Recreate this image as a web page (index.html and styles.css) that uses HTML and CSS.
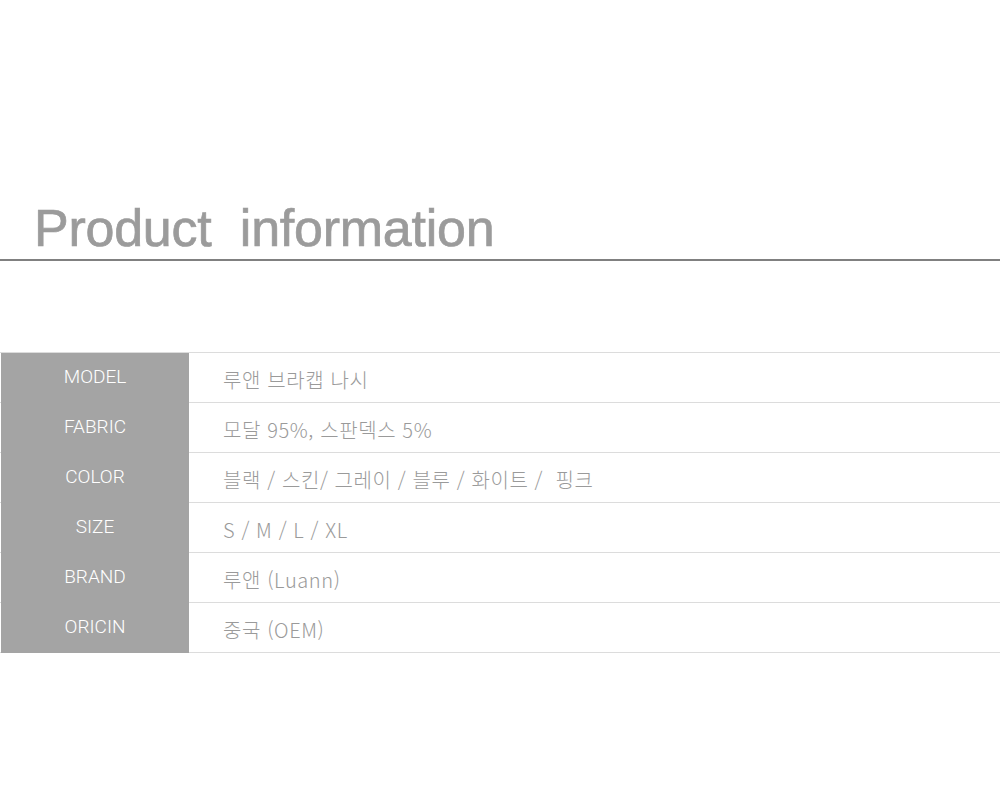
FILE: index.html
```html
<!DOCTYPE html>
<html lang="ko">
<head>
<meta charset="utf-8">
<link rel="stylesheet" href="styles.css">
</head>
<body>
<div class="page">
  <div class="head">
    <h1 class="title">Product&nbsp; information</h1>
  </div>
  <div class="table">
    <div class="row"><div class="label">MODEL</div><div class="value">루앤 브라캡 나시</div></div>
    <div class="row"><div class="label">FABRIC</div><div class="value">모달 95%, 스판덱스 5%</div></div>
    <div class="row"><div class="label">COLOR</div><div class="value">블랙 / 스킨/ 그레이 / 블루 / 화이트 /&nbsp; 핑크</div></div>
    <div class="row"><div class="label">SIZE</div><div class="value">S / M / L / XL</div></div>
    <div class="row"><div class="label">BRAND</div><div class="value">루앤 (Luann)</div></div>
    <div class="row"><div class="label">ORICIN</div><div class="value">중국 (OEM)</div></div>
  </div>
</div>
</body>
</html>
```
FILE: styles.css
```css
html, body {
  margin: 0;
  padding: 0;
  background: #fff;
}
.page {
  width: 1000px;
  height: 792px;
  overflow: hidden;
}
.head {
  padding-top: 198px;
  border-bottom: 2px solid #808080;
}
.title {
  margin: 0 0 0 34px;
  font-family: "Liberation Sans", Arial, sans-serif;
  font-weight: normal;
  font-size: 52px;
  letter-spacing: -0.25px;
  -webkit-text-stroke: 0.7px #9b9b9b;
  line-height: 60px;
  color: #9b9b9b;
  height: 61px;
}
.table {
  margin-top: 91px;
  border-top: 1px solid #dcdcdc;
}
.row {
  display: grid;
  grid-template-columns: 188px 1fr;
  height: 49px;
  border-bottom: 1px solid #dcdcdc;
  padding-left: 1px;
}
.label {
  background: #a4a4a4;
  color: #fff;
  font-family: Roboto, "Liberation Sans", sans-serif;
  font-weight: 300;
  font-size: 19px;
  display: flex;
  align-items: center;
  justify-content: center;
  margin-bottom: -1px;
  padding-bottom: 3px;
}
.value {
  font-family: "Noto Sans CJK KR", sans-serif;
  font-weight: 300;
  font-size: 20px;
  letter-spacing: 0.6px;
  color: #9a9a9a;
  display: flex;
  align-items: center;
  padding-left: 34px;
  padding-top: 4px;
}
```
